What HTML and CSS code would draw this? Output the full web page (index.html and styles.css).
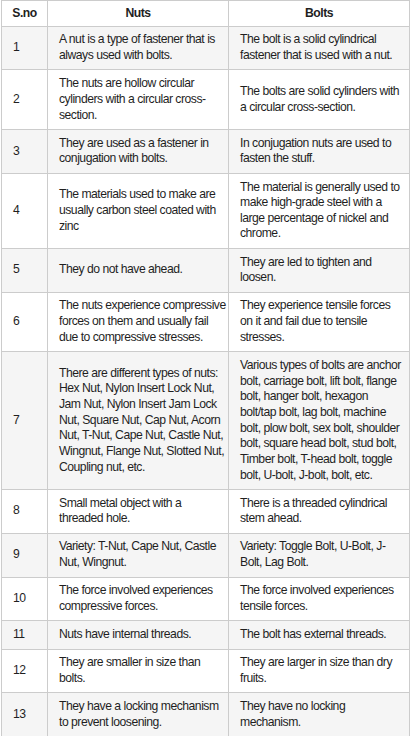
FILE: index.html
```html
<!DOCTYPE html>
<html>
<head>
<meta charset="utf-8">
<link rel="stylesheet" href="styles.css">
</head>
<body>
<table class="cmp">
<colgroup><col class="c-no"><col class="c-txt"><col class="c-txt"></colgroup>
<thead>
<tr><th>S.no</th><th>Nuts</th><th>Bolts</th></tr>
</thead>
<tbody>
<tr><td>1</td><td>A nut is a type of fastener that is<br>always used with bolts.</td><td>The bolt is a solid cylindrical<br>fastener that is used with a nut.</td></tr>
<tr><td>2</td><td>The nuts are hollow circular<br>cylinders with a circular cross-<br>section.</td><td>The bolts are solid cylinders with<br>a circular cross-section.</td></tr>
<tr><td>3</td><td>They are used as a fastener in<br>conjugation with bolts.</td><td>In conjugation nuts are used to<br>fasten the stuff.</td></tr>
<tr><td>4</td><td>The materials used to make are<br>usually carbon steel coated with<br>zinc</td><td>The material is generally used to<br>make high-grade steel with a<br>large percentage of nickel and<br>chrome.</td></tr>
<tr><td>5</td><td>They do not have ahead.</td><td>They are led to tighten and<br>loosen.</td></tr>
<tr><td>6</td><td>The nuts experience compressive<br>forces on them and usually fail<br>due to compressive stresses.</td><td>They experience tensile forces<br>on it and fail due to tensile<br>stresses.</td></tr>
<tr><td>7</td><td>There are different types of nuts:<br>Hex Nut, Nylon Insert Lock Nut,<br>Jam Nut, Nylon Insert Jam Lock<br>Nut, Square Nut, Cap Nut, Acorn<br>Nut, T-Nut, Cape Nut, Castle Nut,<br>Wingnut, Flange Nut, Slotted Nut,<br>Coupling nut, etc.</td><td>Various types of bolts are anchor<br>bolt, carriage bolt, lift bolt, flange<br>bolt, hanger bolt, hexagon<br>bolt/tap bolt, lag bolt, machine<br>bolt, plow bolt, sex bolt, shoulder<br>bolt, square head bolt, stud bolt,<br>Timber bolt, T-head bolt, toggle<br>bolt, U-bolt, J-bolt, bolt, etc.</td></tr>
<tr><td>8</td><td>Small metal object with a<br>threaded hole.</td><td>There is a threaded cylindrical<br>stem ahead.</td></tr>
<tr><td>9</td><td>Variety: T-Nut, Cape Nut, Castle<br>Nut, Wingnut.</td><td>Variety: Toggle Bolt, U-Bolt, J-<br>Bolt, Lag Bolt.</td></tr>
<tr><td>10</td><td>The force involved experiences<br>compressive forces.</td><td>The force involved experiences<br>tensile forces.</td></tr>
<tr><td>11</td><td>Nuts have internal threads.</td><td>The bolt has external threads.</td></tr>
<tr><td>12</td><td>They are smaller in size than<br>bolts.</td><td>They are larger in size than dry<br>fruits.</td></tr>
<tr><td>13</td><td>They have a locking mechanism<br>to prevent loosening.</td><td>They have no locking<br>mechanism.</td></tr>
</tbody>
</table>
</body>
</html>
```

FILE: styles.css
```css
html, body {
  margin: 0;
  padding: 0;
  background: #fff;
}
body {
  padding-left: 1px;
  font-family: "Liberation Sans", Arial, sans-serif;
  font-size: 12.2px;
  letter-spacing: -0.5px;
  line-height: 15.66px;
  color: #1f1f1f;
}
.cmp {
  border-collapse: collapse;
  width: 409px;
  table-layout: fixed;
}
.c-no { width: 46px; }
.c-txt { width: 181px; }
.cmp th, .cmp td {
  border: 1px solid #ccc;
  padding: 5.75px 6px 5.75px 11px;
  vertical-align: middle;
  text-align: left;
  white-space: nowrap;
  overflow: hidden;
}
.cmp th {
  font-weight: bold;
  text-align: center;
  padding: 4.5px 6px 4.5px 6px;
}
.cmp tbody tr:nth-child(odd) td {
  background: #f5f5f5;
}
```
